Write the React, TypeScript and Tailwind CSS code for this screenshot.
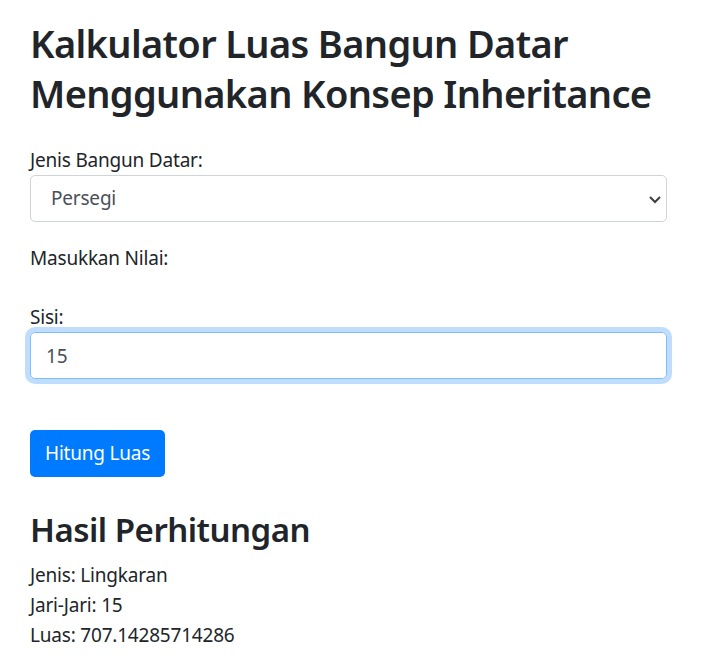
import { useState } from "react";

const font = { fontFamily: '"Noto Sans", "Open Sans", sans-serif' };

export default function App() {
  const [jenis, setJenis] = useState("persegi");
  const [sisi, setSisi] = useState("15");

  return (
    <div className="min-h-screen bg-white text-[#212529]" style={font}>
      <div className="pl-[30px] pt-[18px] w-[667px]">
        <h1 className="text-[38px] leading-[50px] font-semibold tracking-[-0.65px]">
          Kalkulator Luas Bangun Datar
          <br />
          Menggunakan Konsep Inheritance
        </h1>

        <form className="mt-[27px]" onSubmit={(e) => e.preventDefault()}>
          {/* jenis bangun */}
          <div className="mb-[21px]">
            <label className="block text-[19px] leading-[30px] tracking-[-0.2px]">Jenis Bangun Datar:</label>
            <div className="relative">
              <select
                value={jenis}
                onChange={(e) => setJenis(e.target.value)}
                className="appearance-none w-full h-[47px] border border-[#ced4da] rounded-[5px] bg-white pl-[20px] pr-10 text-[19px] tracking-[-0.2px] text-[#495057] outline-none"
              >
                <option value="persegi">Persegi</option>
                <option value="lingkaran">Lingkaran</option>
              </select>
              <svg
                className="absolute right-[5px] top-[20px] pointer-events-none"
                width="14"
                height="9"
                viewBox="0 0 14 9"
              >
                <path d="M2 2l5 5 5-5" fill="none" stroke="#3c4043" strokeWidth="2" />
              </svg>
            </div>
          </div>

          <div className="text-[19px] leading-[30px] tracking-[-0.2px]">Masukkan Nilai:</div>

          <div className="mt-[29px]">
            <label className="block text-[19px] leading-[30px] tracking-[-0.2px]">Sisi:</label>
            <input
              value={sisi}
              onChange={(e) => setSisi(e.target.value)}
              className="w-full h-[47px] border border-[#80bdff] rounded-[5px] px-[15px] text-[19px] text-[#495057] outline-none shadow-[0_0_0_5px_rgba(0,123,255,0.25)]"
            />
          </div>

          <button
            type="submit"
            className="mt-[51px] h-[47px] px-[15px] rounded-[5px] bg-[#007bff] text-white text-[19px] tracking-[-0.2px]"
          >
            Hitung Luas
          </button>
        </form>

        {/* hasil */}
        <h2 className="mt-[33px] mb-[10px] text-[33px] leading-[40px] font-semibold tracking-[-0.5px]">
          Hasil Perhitungan
        </h2>
        <div className="text-[19px] leading-[30px] tracking-[-0.2px]">
          <div>Jenis: Lingkaran</div>
          <div>Jari-Jari: 15</div>
          <div>Luas: 707.14285714286</div>
        </div>
      </div>
    </div>
  );
}
